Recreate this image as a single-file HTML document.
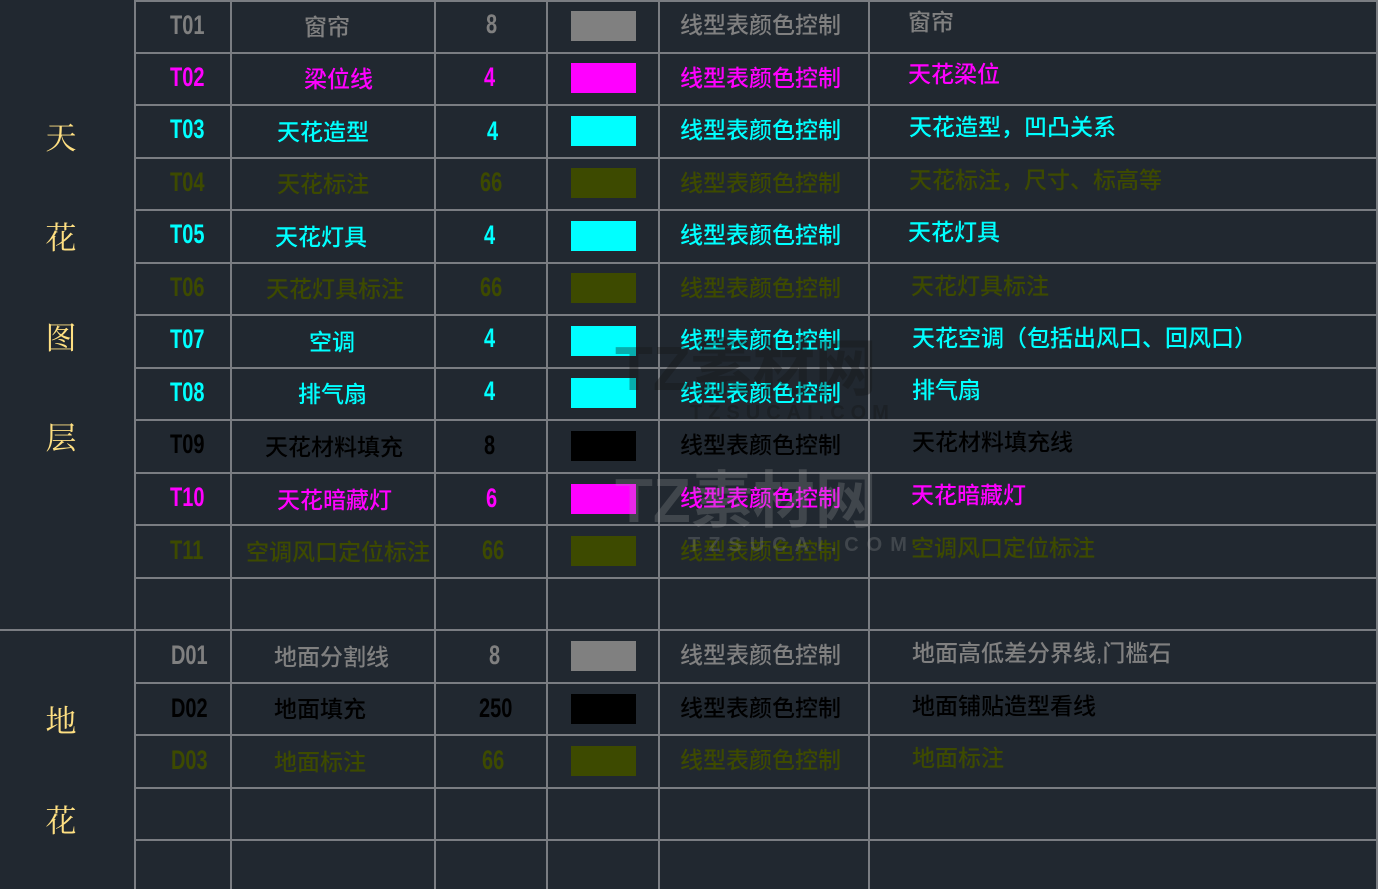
<!DOCTYPE html>
<html><head><meta charset="utf-8"><style>
html,body{margin:0;padding:0}
body{width:1378px;height:889px;background:#212830;position:relative;overflow:hidden;font-family:"Liberation Sans","Noto Sans CJK SC",sans-serif}
.h{position:absolute;height:2px;background:#7a7d82}
.v{position:absolute;width:2px;background:#7a7d82;top:0;bottom:0}
.t{position:absolute;white-space:nowrap;line-height:52px;height:52px}
.c{font-size:27px;transform:scaleX(.74);transform-origin:left center;font-weight:bold}
.n{font-size:23px;font-weight:500}
.s{position:absolute;left:571px;width:65px;height:30px}
.L{position:absolute;left:44px;width:34px;text-align:center;font-size:31px;color:#ffe082;font-family:"Liberation Serif","Noto Serif CJK SC",serif;line-height:34px}
.g{color:#808080}.m{color:#ff00ff}.cy{color:#00ffff}.o{color:#3d4a00}.k{color:#000}
.wm{position:absolute;font-weight:bold;color:rgba(160,160,160,.25);font-family:"Liberation Sans","Noto Sans CJK SC",sans-serif}
</style></head><body>
<div class="h" style="left:135px;right:0;top:0"></div>
<div class="h" style="left:135px;right:0;top:52px"></div>
<div class="h" style="left:135px;right:0;top:104px"></div>
<div class="h" style="left:135px;right:0;top:157px"></div>
<div class="h" style="left:135px;right:0;top:209px"></div>
<div class="h" style="left:135px;right:0;top:262px"></div>
<div class="h" style="left:135px;right:0;top:314px"></div>
<div class="h" style="left:135px;right:0;top:367px"></div>
<div class="h" style="left:135px;right:0;top:419px"></div>
<div class="h" style="left:135px;right:0;top:472px"></div>
<div class="h" style="left:135px;right:0;top:524px"></div>
<div class="h" style="left:135px;right:0;top:577px"></div>
<div class="h" style="left:0;right:0;top:629px"></div>
<div class="h" style="left:135px;right:0;top:682px"></div>
<div class="h" style="left:135px;right:0;top:734px"></div>
<div class="h" style="left:135px;right:0;top:787px"></div>
<div class="h" style="left:135px;right:0;top:839px"></div>
<div class="v" style="left:134px"></div>
<div class="v" style="left:230px"></div>
<div class="v" style="left:434px"></div>
<div class="v" style="left:546px"></div>
<div class="v" style="left:658px"></div>
<div class="v" style="left:868px"></div>
<div class="v" style="left:1376px"></div>

<div class="L" style="top:122px">天</div>
<div class="L" style="top:222px">花</div>
<div class="L" style="top:322px">图</div>
<div class="L" style="top:422px">层</div>
<div class="L" style="top:705px">地</div>
<div class="L" style="top:805px">花</div>

<div class="t c g" style="left:170px;top:-1px">T01</div><div class="t n g" style="left:304px;top:1px">窗帘</div><div class="t c g" style="left:486px;top:-2px">8</div><div class="s" style="top:11px;background:#808080"></div><div class="t n g" style="left:680px;top:-1px">线型表颜色控制</div><div class="t n g" style="left:908px;top:-4px">窗帘</div>

<div class="t c m" style="left:170px;top:51px">T02</div><div class="t n m" style="left:304px;top:53px">梁位线</div><div class="t c m" style="left:484px;top:51px">4</div><div class="s" style="top:63px;background:#ff00ff"></div><div class="t n m" style="left:680px;top:52px">线型表颜色控制</div><div class="t n m" style="left:908px;top:48px">天花梁位</div>

<div class="t c cy" style="left:170px;top:103px">T03</div><div class="t n cy" style="left:277px;top:106px">天花造型</div><div class="t c cy" style="left:487px;top:105px">4</div><div class="s" style="top:116px;background:#00ffff"></div><div class="t n cy" style="left:680px;top:104px">线型表颜色控制</div><div class="t n cy" style="left:909px;top:101px">天花造型，凹凸关系</div>

<div class="t c o" style="left:170px;top:156px">T04</div><div class="t n o" style="left:277px;top:158px">天花标注</div><div class="t c o" style="left:480px;top:156px">66</div><div class="s" style="top:168px;background:#3d4a00"></div><div class="t n o" style="left:680px;top:157px">线型表颜色控制</div><div class="t n o" style="left:909px;top:154px">天花标注，尺寸、标高等</div>

<div class="t c cy" style="left:170px;top:208px">T05</div><div class="t n cy" style="left:275px;top:211px">天花灯具</div><div class="t c cy" style="left:484px;top:209px">4</div><div class="s" style="top:221px;background:#00ffff"></div><div class="t n cy" style="left:680px;top:209px">线型表颜色控制</div><div class="t n cy" style="left:908px;top:206px">天花灯具</div>

<div class="t c o" style="left:170px;top:261px">T06</div><div class="t n o" style="left:266px;top:263px">天花灯具标注</div><div class="t c o" style="left:480px;top:261px">66</div><div class="s" style="top:273px;background:#3d4a00"></div><div class="t n o" style="left:680px;top:262px">线型表颜色控制</div><div class="t n o" style="left:911px;top:260px">天花灯具标注</div>

<div class="t c cy" style="left:170px;top:313px">T07</div><div class="t n cy" style="left:309px;top:316px">空调</div><div class="t c cy" style="left:484px;top:312px">4</div><div class="s" style="top:326px;background:#00ffff"></div><div class="t n cy" style="left:680px;top:314px">线型表颜色控制</div><div class="t n cy" style="left:912px;top:312px">天花空调（包括出风口、回风口）</div>

<div class="t c cy" style="left:170px;top:366px">T08</div><div class="t n cy" style="left:298px;top:368px">排气扇</div><div class="t c cy" style="left:484px;top:365px">4</div><div class="s" style="top:378px;background:#00ffff"></div><div class="t n cy" style="left:680px;top:367px">线型表颜色控制</div><div class="t n cy" style="left:912px;top:364px">排气扇</div>

<div class="t c k" style="left:170px;top:418px">T09</div><div class="t n k" style="left:265px;top:421px">天花材料填充</div><div class="t c k" style="left:484px;top:419px">8</div><div class="s" style="top:431px;background:#000"></div><div class="t n k" style="left:680px;top:419px">线型表颜色控制</div><div class="t n k" style="left:912px;top:416px">天花材料填充线</div>

<div class="t c m" style="left:170px;top:471px">T10</div><div class="t n m" style="left:277px;top:474px">天花暗藏灯</div><div class="t c m" style="left:486px;top:472px">6</div><div class="s" style="top:484px;background:#ff00ff"></div><div class="t n m" style="left:680px;top:472px">线型表颜色控制</div><div class="t n m" style="left:911px;top:469px">天花暗藏灯</div>

<div class="t c o" style="left:170px;top:524px">T11</div><div class="t n o" style="left:246px;top:526px">空调风口定位标注</div><div class="t c o" style="left:482px;top:524px">66</div><div class="s" style="top:536px;background:#3d4a00"></div><div class="t n o" style="left:680px;top:525px">线型表颜色控制</div><div class="t n o" style="left:911px;top:522px">空调风口定位标注</div>

<div class="t c g" style="left:171px;top:629px">D01</div><div class="t n g" style="left:274px;top:631px">地面分割线</div><div class="t c g" style="left:489px;top:629px">8</div><div class="s" style="top:641px;background:#808080"></div><div class="t n g" style="left:680px;top:629px">线型表颜色控制</div><div class="t n g" style="left:912px;top:627px">地面高低差分界线,门槛石</div>

<div class="t c k" style="left:171px;top:682px">D02</div><div class="t n k" style="left:274px;top:683px">地面填充</div><div class="t c k" style="left:479px;top:682px">250</div><div class="s" style="top:694px;background:#000"></div><div class="t n k" style="left:680px;top:682px">线型表颜色控制</div><div class="t n k" style="left:912px;top:680px">地面铺贴造型看线</div>

<div class="t c o" style="left:171px;top:734px">D03</div><div class="t n o" style="left:274px;top:736px">地面标注</div><div class="t c o" style="left:482px;top:734px">66</div><div class="s" style="top:746px;background:#3d4a00"></div><div class="t n o" style="left:680px;top:734px">线型表颜色控制</div><div class="t n o" style="left:912px;top:732px">地面标注</div>

<div class="wm" style="left:615px;top:318px;font-size:62px;color:rgba(20,20,20,.35)">TZ素材网</div>
<div class="wm" style="left:690px;top:402px;font-size:20px;letter-spacing:6px;color:rgba(20,20,20,.35)">TZSUCAI.COM</div>
<div class="wm" style="left:615px;top:450px;font-size:62px">TZ素材网</div>
<div class="wm" style="left:688px;top:534px;font-size:20px;letter-spacing:8px">TZSUCAI.COM</div>
</body></html>
